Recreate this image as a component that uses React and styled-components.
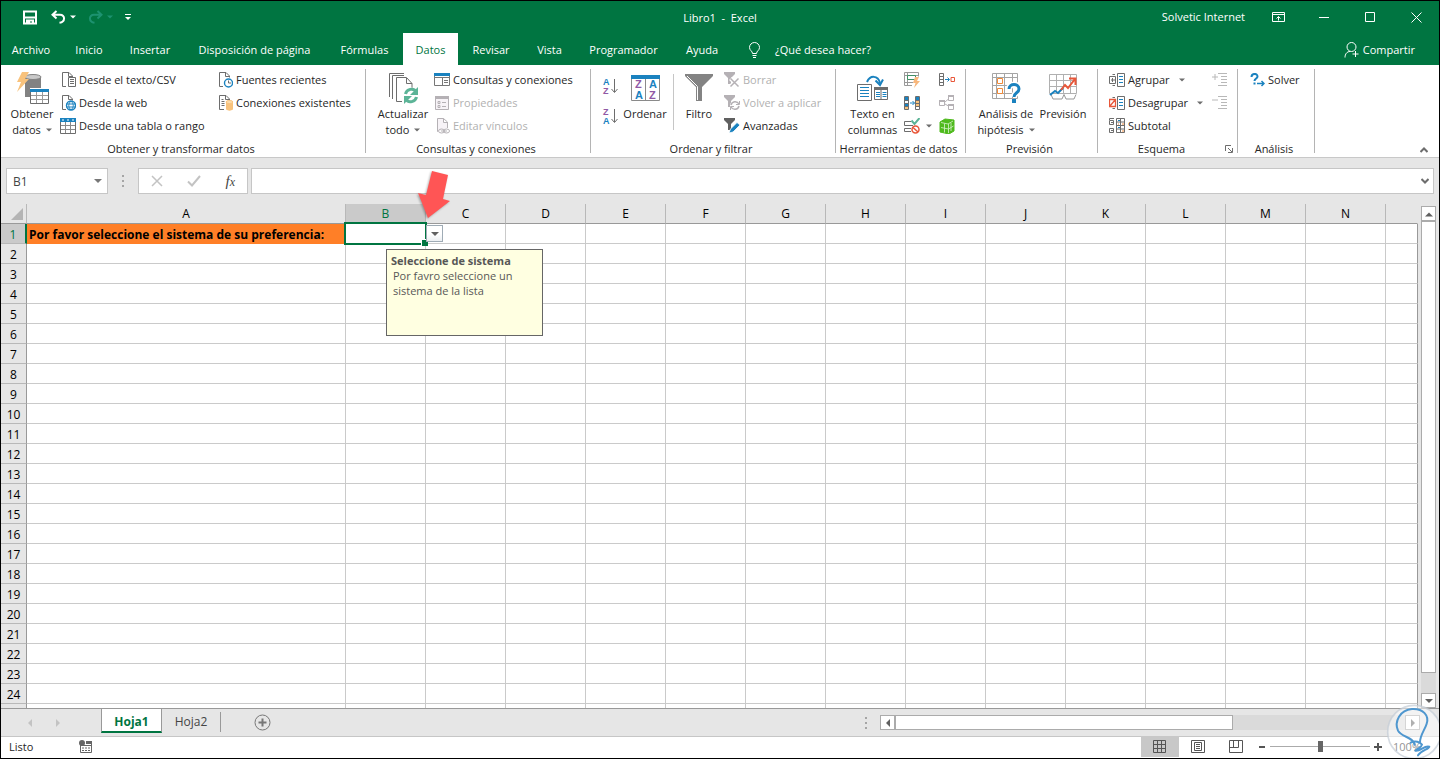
import { useState } from "react";
import styled, { createGlobalStyle } from "styled-components";

const GlobalStyle = createGlobalStyle`
  * { box-sizing: border-box; }
  body {
    margin: 0;
    font-family: "Open Sans", "Noto Sans", sans-serif;
    font-size: 11px;
    line-height: 16px;
    color: #262626;
  }
  button, input {
    font: inherit;
    color: inherit;
    border: 0;
    padding: 0;
    margin: 0;
    background: none;
  }
  svg { display: block; flex: none; }
`;

const GREEN = "#007541";
const GREY = "#6d6d6d";
const BLUE = "#1a82bf";
const SOFT = "#b5b1b5";

const Window = styled.div`
  position: relative;
  display: flex;
  flex-direction: column;
  height: 100vh;
  min-height: 400px;
  border: 1px solid #000;
  background: #e6e6e6;
  overflow: hidden;
`;

/* ---------- title bar ---------- */
const TitleBar = styled.header`
  display: grid;
  grid-template-columns: 1fr auto 1fr;
  align-items: center;
  height: 32px;
  background: ${GREEN};
  color: #fff;
`;
const QuickAccess = styled.div`
  display: flex;
  align-items: center;
  gap: 12px;
  padding-left: 21px;
`;
const PlainButton = styled.button`
  display: flex;
  align-items: center;
  gap: 4px;
`;
const SaveButton = styled(PlainButton)`
  padding-right: 2px;
`;
const Title = styled.h1`
  margin: 0;
  padding-top: 2px;
  font-size: 11px;
  font-weight: 400;
  white-space: pre;
`;
const WindowTools = styled.div`
  display: flex;
  align-items: center;
  justify-content: flex-end;
`;
const UserName = styled.span`
  margin-right: 10px;
`;
const WindowButton = styled.button`
  display: flex;
  align-items: center;
  justify-content: center;
  width: 46px;
  height: 32px;
`;

/* ---------- ribbon tabs ---------- */
const TabBar = styled.nav`
  display: flex;
  height: 32px;
  background: ${GREEN};
  color: #fff;
`;
const RibbonTab = styled.button`
  width: ${(p) => p.$w}px;
  padding-top: 2px;
  white-space: nowrap;
  background: ${(p) => (p.$active ? "#fff" : "none")};
  color: ${(p) => (p.$active ? GREEN : "#fff")};
`;
const TellMe = styled.button`
  display: flex;
  align-items: center;
  gap: 14px;
  margin-left: 16px;
  padding-top: 2px;
`;
const Share = styled(TellMe)`
  gap: 4px;
  margin-left: auto;
  padding-right: 24px;
`;

/* ---------- ribbon ---------- */
const Ribbon = styled.section`
  display: flex;
  height: 93px;
  background: #fff;
  border-bottom: 1px solid #c8c8c8;
`;
const GroupBox = styled.div`
  display: flex;
  flex-direction: column;
  flex: none;
  width: ${(p) => p.$w}px;
  margin: 4px 0;
  border-right: 1px solid #b4b4b4;
`;
const GroupBody = styled.div`
  display: flex;
  flex: none;
  height: 69px;
  padding-left: ${(p) => p.$pad}px;
`;
const GroupFooter = styled.div`
  display: flex;
  align-items: center;
  padding: 3px 4px 0 0;
`;
const GroupLabel = styled.span`
  flex: 1;
  text-align: center;
  white-space: nowrap;
`;
const BigButton = styled.button`
  display: flex;
  flex-direction: column;
  align-items: center;
  flex: none;
  width: ${(p) => p.$w}px;
  white-space: nowrap;
`;
const BigIcon = styled.span`
  display: flex;
  align-items: center;
  justify-content: center;
  height: 37px;
`;
const BigLine = styled.span`
  display: flex;
  align-items: center;
  gap: 5px;
`;
const Stack = styled.div`
  display: flex;
  flex-direction: column;
  flex: none;
  width: ${(p) => p.$w}px;
`;
const SmallButton = styled.button`
  display: flex;
  align-items: center;
  gap: ${(p) => p.$gap || 3}px;
  height: 23px;
  padding-bottom: 2px;
  white-space: nowrap;
  color: ${(p) => (p.disabled ? "#b1b1b1" : "#262626")};
`;
const FarCaret = styled.span`
  margin-left: ${(p) => (p.$far ? 6 : 0)}px;
`;
const SortStack = styled.div`
  display: flex;
  flex-direction: column;
  gap: 14px;
  width: 21px;
  padding: 9px 0 0 3px;
`;
const InnerLine = styled.i`
  width: 1px;
  height: 56px;
  margin: 5px 0 0 4px;
  background: #c6c6c6;
`;
const Collapse = styled.button`
  align-self: flex-end;
  margin: 0 11px 4px auto;
`;

/* ---------- formula bar ---------- */
const FormulaBar = styled.div`
  display: flex;
  align-items: center;
  height: 46px;
  padding: 0 5px;
`;
const Field = styled.div`
  display: flex;
  align-items: center;
  height: 26px;
  background: #fff;
  border: 1px solid #c6c6c6;
`;
const NameBox = styled(Field)`
  width: 102px;
  padding: 0 5px 0 6px;
  input { flex: 1; min-width: 0; padding-top: 1px; font-size: 12px; color: #444; }
`;
const Dots = styled.span`
  display: flex;
  flex-direction: column;
  gap: 3px;
  margin: ${(p) => p.$m};
  &::before, &::after, i { content: ""; width: 2px; height: 2px; background: #a5a5a5; }
`;
const FormulaTools = styled(Field)`
  justify-content: space-between;
  width: 110px;
  padding: 0 12px;
  margin-right: 3px;
`;
const FxButton = styled.button`
  font: italic 15px "Liberation Serif", serif;
  color: #444;
  sub { font-size: 12px; vertical-align: baseline; }
`;
const FormulaInput = styled(Field)`
  flex: 1;
  padding-right: 4px;
  input { flex: 1; padding: 0 6px; }
`;

/* ---------- sheet ---------- */
const SheetArea = styled.main`
  display: flex;
  flex: 1;
  min-height: 0;
  border-bottom: 1px solid #999;
  font-size: 12px;
`;
/* clips rows at the bottom but lets the pointer reach over the formula bar */
const GridWrap = styled.div`
  flex: 1;
  min-width: 0;
  clip-path: inset(-40px 0 0 0);
`;
const Grid = styled.table`
  width: 100%;
  table-layout: fixed;
  border-collapse: separate;
  border-spacing: 0;
`;
const Col = styled.col`
  width: ${(p) => p.$w}px;
`;
const ColHead = styled.th`
  height: 20px;
  padding: 0;
  line-height: 18px;
  font-weight: 400;
  color: ${(p) => (p.$on ? GREEN : "#000")};
  background: ${(p) => (p.$on ? "#cacaca" : "#e6e6e6")};
  border-right: 1px solid ${(p) => (p.$last ? "#e6e6e6" : "#b8b8b8")};
  border-bottom: 1px solid #999;
`;
const Corner = styled(ColHead)`
  padding: 0 3px 0 10px;
`;
const RowHead = styled.th`
  height: 20px;
  padding: 2px 0 0;
  line-height: 17px;
  font-weight: 400;
  color: ${(p) => (p.$on ? GREEN : "#000")};
  background: ${(p) => (p.$on ? "#cacaca" : "#e6e6e6")};
  border-right: ${(p) => (p.$on ? `2px solid ${GREEN}` : "1px solid #999")};
  border-bottom: 1px solid #b8b8b8;
`;
const Cell = styled.td`
  position: relative;
  padding: 2px 2px 0;
  line-height: 17px;
  white-space: nowrap;
  font-weight: 700;
  color: #000;
  background: ${(p) => (p.$fill ? "#ff7f27" : "#fff")};
  border-right: 1px solid ${(p) => (p.$last ? "#999" : "#cacaca")};
  border-bottom: 1px solid ${(p) => (p.$fill ? "#ff7f27" : "#cacaca")};
`;
const Selection = styled.div`
  position: absolute;
  inset: -2px;
  border: 2px solid ${GREEN};
  z-index: 1;
  &::after {
    content: "";
    position: absolute;
    right: -3px;
    bottom: -3px;
    width: 6px;
    height: 6px;
    background: ${GREEN};
    border: solid #fff;
    border-width: 1px 0 0 1px;
  }
`;
const PickButton = styled.button`
  position: absolute;
  left: 80px;
  top: 1px;
  z-index: 1;
  display: flex;
  align-items: center;
  justify-content: center;
  width: 17px;
  height: 17px;
  border: 1px solid #9fabb5;
  background: linear-gradient(#fff 50%, #eceff2);
`;
const InputHint = styled.div`
  position: absolute;
  left: 40px;
  top: 25px;
  z-index: 2;
  width: 157px;
  height: 87px;
  padding: 3px 4px;
  border: 1px solid #666;
  background: #ffffe1;
  color: #575757;
  font-size: 11px;
  font-weight: 400;
  line-height: 15px;
  white-space: normal;
  p { margin: 0 12px 0 2px; }
`;
const Pointer = styled.svg`
  position: absolute;
  left: 69px;
  top: -56px;
  z-index: 3;
  filter: drop-shadow(-1px 1px 1px rgba(0, 0, 0, 0.3));
`;
const VScroll = styled.div`
  display: flex;
  flex-direction: column;
  width: 15px;
  margin: 2px 3px 0;
  background: #dadada;
`;
const ScrollButton = styled.button`
  display: flex;
  align-items: center;
  justify-content: center;
  flex: none;
  width: 15px;
  height: 15px;
  background: #fff;
  border: 1px solid #ababab;
`;
const ThumbV = styled.div`
  flex: 1;
  margin-bottom: 20px;
  background: #fff;
  border: 1px solid #ababab;
`;

/* ---------- sheet tabs + status ---------- */
const SheetTabs = styled.div`
  display: flex;
  align-items: center;
  height: 27px;
  font-size: 12px;
`;
const NavArrows = styled.div`
  display: flex;
  gap: 20px;
  width: 100px;
  padding-left: 25px;
`;
const SheetTab = styled.button`
  align-self: flex-start;
  width: ${(p) => (p.$on ? 61 : 59)}px;
  height: ${(p) => (p.$on ? 24 : 20)}px;
  margin-top: ${(p) => (p.$on ? 0 : 3)}px;
  padding-top: ${(p) => (p.$on ? 3 : 0)}px;
  font-weight: ${(p) => (p.$on ? 700 : 400)};
  color: ${(p) => (p.$on ? GREEN : "#444")};
  background: ${(p) => (p.$on ? "#fff" : "none")};
  border-right: 1px solid #999;
  border-left: ${(p) => (p.$on ? "1px solid #999" : "0")};
  border-bottom: ${(p) => (p.$on ? `2px solid ${GREEN}` : "0")};
`;
const AddSheet = styled.button`
  margin-left: 33px;
`;
const HScroll = styled.div`
  display: flex;
  width: 540px;
  margin: 0 19px 0 13px;
  background: #dadada;
`;
const ThumbH = styled.div`
  width: 338px;
  background: #fff;
  border: 1px solid #ababab;
  margin-right: auto;
`;
const StatusBar = styled.footer`
  display: flex;
  align-items: center;
  height: 22px;
  padding: 0 19px 2px 8px;
  background: #fff;
  border-top: 1px solid #c6c6c6;
`;
const StatusText = styled.span`
  width: 70px;
`;
const Views = styled.div`
  display: flex;
  margin-left: auto;
`;
const ViewButton = styled.button`
  display: flex;
  align-items: center;
  justify-content: center;
  width: 38px;
  height: 21px;
  background: ${(p) => (p.$on ? "#c8c8c8" : "none")};
`;
const Zoom = styled.div`
  display: flex;
  align-items: center;
  gap: 4px;
  margin-left: 4px;
`;
const ZoomSlider = styled.input`
  appearance: none;
  width: 100px;
  height: 12px;
  background: linear-gradient(#ababab, #ababab) center / 100% 1px no-repeat;
  &::-webkit-slider-thumb {
    appearance: none;
    width: 5px;
    height: 11px;
    background: #666;
  }
`;
const ZoomValue = styled.span`
  width: 27px;
  margin-left: 7px;
  color: #222;
`;
const Badge = styled.svg`
  position: absolute;
  right: -1px;
  bottom: -1px;
  z-index: 5;
`;

/* ---------- icons ---------- */
const Ico = ({ w = 16, h = 16, color = GREY, children, ...rest }) => (
  <svg width={w} height={h} viewBox={`0 0 ${w} ${h}`} fill="none" stroke={color} aria-hidden="true" {...rest}>
    {children}
  </svg>
);
const Caret = ({ color = GREY }) => (
  <Ico w={6} h={4}><path d="M0 .5h6L3 3.5z" fill={color} stroke="none" /></Ico>
);
const Arrow = ({ dir, color = "#606060" }) => {
  const d = {
    up: "M0 6.5h8L4 2.5z",
    down: "M0 2h8L4 6z",
    left: "M6 0v8L2 4z",
    right: "M2 0v8l4-4z",
  }[dir];
  return <Ico w={8} h={8}><path d={d} fill={color} stroke="none" /></Ico>;
};
const Doc = ({ color = GREY }) => (
  <path stroke={color} d="M6 14.5H2.5V.5H9L12.5 4v1.500M8.500 .5v4h4" />
);

const SaveIcon = () => (
  <Ico w={15} h={15} color="#fff">
    <path d="M2 1.500h12v12H2zM2 7.500h12M5 13.500v-3h6v3" strokeWidth="2" />
    <path d="M6 11h2v3H6z" fill="#fff" stroke="none" />
  </Ico>
);
const UndoIcon = ({ flip, color }) => (
  <Ico w={15} h={14} color={color} strokeWidth="2">
    <g transform={flip ? "translate(15 0) scale(-1 1)" : undefined}>
      <path d="M5.500 1L1.500 4.800l4 3.700M2 4.800h7c5.500 0 5.500 7.200-.5 8" />
    </g>
  </Ico>
);
const CustomizeIcon = () => (
  <Ico w={6} h={7} color="#fff"><path d="M0 .5h6" /><path d="M0 3h6L3 6z" fill="#fff" stroke="none" /></Ico>
);
const RibbonOptionsIcon = () => (
  <Ico w={13} h={11} color="#fff"><path d="M.5 .5h12v9H.5zM1 2.500h11M6.500 8.500v-4M4.500 6.500l2-2 2 2" /></Ico>
);
const BulbIcon = () => (
  <Ico w={13} h={17} color="#fff"><path d="M4.500 11.500C4.500 9 1.500 8.500 1.500 5.500a5 5 0 0 1 10 0c0 3-3 3.500-3 6zM4.500 13.500h4M5 15.500h3" /></Ico>
);
const PersonIcon = () => (
  <Ico w={15} h={16} color="#fff"><circle cx="7.500" cy="5" r="4.500" /><path d="M1 15.500c0-3.500 2-6 5-6M11.500 9v6M8.500 12h6" /></Ico>
);

const GetDataIcon = () => (
  <Ico w={33} h={34}>
    <path d="M9 6v20h5V17h11V6z" fill="#828282" stroke="none" />
    <ellipse cx="17" cy="6" rx="8" ry="2.500" fill="#c8c8c8" stroke="#828282" />
    <path d="M6 1h7L9 8h4L1 21l4-10H1z" fill="#f8c27c" stroke="none" />
    <path d="M14.500 18.500h18v14h-18z" fill="#fff" />
    <path d="M15 24.500h17M15 28.500h17M20.500 20v12M26.500 20v12" stroke="#999" />
    <path d="M14 18h19v3H14z" fill={BLUE} stroke="none" />
  </Ico>
);
const CsvIcon = () => (
  <Ico><Doc /><path d="M8.500 5.500h7v9h-7z" fill="#fff" /><path d="M10 7.500h4M10 9.500h4M10 11.500h4" /></Ico>
);
const WebIcon = () => (
  <Ico>
    <Doc /><circle cx="11" cy="10.500" r="4.500" fill="#fff" stroke={BLUE} strokeWidth="1.400" />
    <path d="M6.500 9h9M6.500 12h9M11 6c-3 3-3 6 0 9M11 6c3 3 3 6 0 9" stroke={BLUE} />
  </Ico>
);
const TableIcon = () => (
  <Ico><path d="M.5 3.500h15v12H.5z" /><path d="M1 7.500h14M1 11.500h14M5.500 4v11M10.500 4v11" stroke="#8a8a8a" /><path d="M0 0h16v4H0z" fill={BLUE} stroke="none" /><path d="M2 2h2M7 2h2M12 2h2" stroke="#fff" /></Ico>
);
const RecentIcon = () => (
  <Ico><Doc /><circle cx="11.500" cy="11" r="4" fill="#fff" stroke={BLUE} strokeWidth="1.400" /><path d="M11.500 8.500V11H14" /></Ico>
);
const ConnIcon = () => (
  <Ico>
    <path d="M7 14.500H2.500V.5H9L12.500 4v1.500M8.500 .5v4h4M4.500 4.500h2M4.500 6.500h3M4.500 8.500h3M4.500 10.500h3" />
    <path d="M9 7v7.500c2 1.500 5 1.500 7 0V7z" fill="#f8c27c" stroke="none" /><ellipse cx="12.500" cy="7" rx="3.500" ry="1.500" fill="#fbdcae" stroke="#f8c27c" />
  </Ico>
);
const RefreshIcon = () => (
  <Ico w={31} h={32}>
    <path d="M1.500 25V1.500H16M4.500 27V3.500H16M14 29.500H8.500V5.500h10l5.500 6V16M18.500 6v5.500H24" />
    <circle cx="23" cy="23.500" r="8" fill="#fff" stroke="none" />
    <g stroke="#5cb497" strokeWidth="3"><path d="M17.500 22c1-5 8-6.500 10.500-2.500M28.500 25c-1 5-8 6.500-10.500 2.500" /></g>
    <path d="M30 15v8h-8zM16 32v-8h8z" fill="#5cb497" stroke="none" />
  </Ico>
);
const QueriesIcon = () => (
  <Ico><path d="M.5 2.500h15v11H.5zM8.500 6v7M10 8.500h4M10 10.500h4M1 5.500h14" stroke="#777" /><path d="M0 1h16v3H0z" fill={BLUE} stroke="none" /></Ico>
);
const PropsIcon = () => (
  <Ico color={SOFT}><path d="M1.500 1.500h13v13h-13z" fill="#f7f3f7" /><path d="M1 1h14v3H1z" fill={SOFT} stroke="none" /><path d="M4 6.500h2v2H4zM4 10.500h2v2H4zM8 7.500h4M8 11.500h4" /></Ico>
);
const LinksIcon = () => (
  <Ico color={SOFT}><path d="M4 13.500H3.500V.5h6L13.500 4v6M9.500 .5v4h4" fill="#f7f3f7" /><ellipse cx="7.500" cy="13" rx="3" ry="2" /><ellipse cx="12.500" cy="13" rx="3" ry="2" /><path d="M7 13h6" /></Ico>
);

// sort glyphs keep A blue and Z purple whichever comes first
const SortText = styled.text`
  font: ${(p) => p.$size}px "Liberation Sans", sans-serif;
  font-weight: 700;
  stroke: none;
  fill: ${(p) => (p.children === "A" ? BLUE : "#9059a5")};
`;
const SortIcon = ({ top, bottom }) => (
  <Ico w={15} h={16} overflow="visible">
    <SortText x="0" y="7" $size={9}>{top}</SortText>
    <SortText x="0" y="16" $size={9}>{bottom}</SortText>
    <path d="M11.500 1v13M8.500 11l3 3.500 3-3.500" />
  </Ico>
);
const SortBigIcon = () => (
  <Ico w={29} h={26} overflow="visible">
    <path d="M.5 3.500h28v22H.5zM14.500 4v21" stroke="#8a8a8a" />
    <path d="M0 0h29v4H0z" fill={BLUE} stroke="none" />
    <SortText x="4" y="13" $size={11}>Z</SortText>
    <SortText x="4" y="24" $size={11}>A</SortText>
    <SortText x="18" y="13" $size={11}>A</SortText>
    <SortText x="18" y="24" $size={11}>Z</SortText>
  </Ico>
);
const FilterIcon = () => (
  <Ico w={28} h={28}>
    <path d="M0 0h28v2L17 13v14h-6V13L0 2z" fill="#838383" stroke="none" />
    <path d="M2 2l10.500 10.500V26" stroke="#fff" />
  </Ico>
);
const Funnel = ({ color }) => <path d="M0 0h11v2L7 6v6H4V6L0 2z" fill={color} stroke="none" />;
const ClearIcon = () => (
  <Ico color={SOFT}><Funnel color={SOFT} /><path d="M6.500 6.500l8 8M14.500 6.500l-8 8" stroke="#fff" strokeWidth="4" /><path d="M6.500 6.500l8 8M14.500 6.500l-8 8" strokeWidth="1.500" /></Ico>
);
const ReapplyIcon = () => (
  <Ico color={SOFT}><Funnel color={SOFT} /><circle cx="11" cy="10.500" r="5" fill="#fff" stroke="none" /><path d="M7 10c1-4 6-4.500 8-1M15 11c-1 4-6 4.500-8 1" strokeWidth="1.500" /><path d="M15.500 6v3.500H12M6.500 15v-3.500H10" /></Ico>
);
const AdvancedIcon = () => (
  <Ico><Funnel color="#606060" /><path d="M5 15l1.500-4L13 4.500l3 2.500L9 14z" fill={BLUE} stroke="#fff" strokeWidth=".8" /></Ico>
);
const TextColsIcon = () => (
  <Ico w={31} h={26}>
    <path d="M.5 9.500h14v16H.5z" /><path d="M3 12.500h9M3 15.500h9M3 18.500h9M3 21.500h9" stroke={BLUE} />
    <path d="M17.500 12.500h13v12h-13zM24 13v11" /><path d="M17 12h14v3H17z" fill={GREY} stroke="none" />
    <path d="M19 17.500h4M19 19.500h4M19 21.500h4M25.500 17.500h4M25.500 19.500h4M25.500 21.500h4" stroke={BLUE} />
    <path d="M10 7c3-7 11-7 13 1" stroke={BLUE} strokeWidth="2" /><path d="M18.500 5.500l4.500 4.500 3-5.500" stroke={BLUE} strokeWidth="2" />
  </Ico>
);
const FlashFillIcon = () => (
  <Ico><path d="M.5 .5h14v4M.5 .5v13H8M1 3.500h13M1 10.500h8M3.500 1v13" stroke="#999" /><path d="M3.500 3.500h8v4h-8z" fill="#fff" stroke="#3e8f63" /><path d="M11 5h4l-2 4h3l-6 7 1.500-5H9z" fill="#f8b77c" stroke="none" /></Ico>
);
const DupIcon = () => (
  <Ico>
    <path d="M.5 1.500h4v13h-4zM11.500 1.500h4v13h-4z" />
    <path d="M1 2h3v3H1zM1 8h3v3H1zM12 2h3v3h-3z" fill={BLUE} stroke="none" />
    <path d="M1 11h3v3H1zM12 5h3v6h-3z" fill="#f8c27c" stroke="none" />
    <path d="M0 5.500h5M0 8.500h5M0 11.500h5M11 5.500h5M11 8.500h5M11 11.500h5" />
    <path d="M6 8h4.500M8.500 6l2 2-2 2" stroke={BLUE} />
  </Ico>
);
const ValidateIcon = () => (
  <Ico><path d="M7 3.500H.5v4H9M7 10.500H.5v3H7" /><path d="M7.500 2.500l3 3.500 5-6" stroke="#5cb497" strokeWidth="2" /><circle cx="11.500" cy="11.500" r="3.500" stroke="#e8573a" strokeWidth="1.500" /><path d="M9 9.500l5 4.500" stroke="#e8573a" strokeWidth="1.500" /></Ico>
);
const ConsolidateIcon = () => (
  <Ico><path d="M.5 1.500h4v12h-4zM1 4.500h3M1 7.500h3M1 10.500h3" /><path d="M6 7.500h4M8.500 5.500l2 2-2 2" stroke={BLUE} /><path d="M12 5.500h3.500v4H12z" stroke="#e8573a" /></Ico>
);
const RelationsIcon = () => (
  <Ico color={SOFT}><path d="M.5 5.500h5v5h-5zM9.500 .5h5v5h-5zM9.500 9.500h5v5h-5zM6 7l3.500-3M6 9l3.500 2" /><path d="M0 5h6v2H0zM9 0h6v2H9zM9 9h6v2H9z" fill={SOFT} stroke="none" /></Ico>
);
const ModelIcon = () => (
  <Ico><path d="M1 4l5-3 9 1v11l-5 3-9-2z" fill="#4fba1d" stroke="#4fba1d" strokeLinejoin="round" /><path d="M2 4.500l7 1.500 5-3M9.500 6v9M5.500 5.500v9M2 9.500l7.500 1.500 5-3M12 5v8" stroke="#d9f3cf" strokeWidth=".8" /></Ico>
);
const WhatIfIcon = () => (
  <Ico w={29} h={30}>
    <path d="M.5 .5h25v25H.5zM.5 4.500h25M.5 12.500h25M.5 20.500h25M4.500 .5v25M12.500 .5v25M20.500 .5v25" stroke="#a5a5a5" />
    <path d="M5.500 5.500h5v5h-5zM5.500 15.500h5v5h-5z" stroke="#f08a38" fill="#fff" />
    <path d="M17 16c0-6 10-6 10 0 0 4-5 3.500-5 8" stroke="#fff" strokeWidth="6" />
    <path d="M17 16c0-6 10-6 10 0 0 4-5 3.500-5 8" stroke={BLUE} strokeWidth="3" />
    <path d="M20 26h4v4h-4z" fill={BLUE} stroke="none" />
  </Ico>
);
const ForecastIcon = () => (
  <Ico w={29} h={27}>
    <path d="M.5 .5h27v19H.5zM.5 6.500h27M.5 12.500h27M7.500 .5v19M14.500 .5v19M21.500 .5v19" stroke="#b0b0b0" />
    <path d="M2 20.500l2 4.500h9l2-4.500 2 4.500h8l2-4.500" stroke="#999" fill="#fff" />
    <path d="M1 21l5-4 3 2 5-5" stroke={BLUE} strokeWidth="2" /><path d="M12 16l4-5 3 3 7-9M20 4.500h6.500V11" stroke="#e8573a" strokeWidth="2" />
  </Ico>
);
const OutlineBase = () => (
  <>
    <path d="M8.500 1.500h7v13h-7zM6 2.500H3.500M6 13.500H3.500" /><path d="M10 4.500h4M10 7.500h4M10 10.500h4" stroke={BLUE} />
  </>
);
const GroupIcon = () => (
  <Ico><OutlineBase /><path d="M.5 4.500h6v7h-6zM2 8h4M3.500 6v4" /></Ico>
);
const UngroupIcon = () => (
  <Ico><OutlineBase /><path d="M.5 4.500h6v7h-6zM1 11l5-6" stroke="#e8573a" strokeWidth="1.300" /></Ico>
);
const SubtotalIcon = () => (
  <Ico>
    <path d="M.5 2.500h4v4h-4zM.5 10.500h4v4h-4zM2 4.500h2M2 12.500h2M.5 2V.5H5M7.500 .5h8v14h-8zM11.500 .5v14M8 4h7M8 7.500h7M8 11h7" />
    <path d="M9 2.500h2M9 9.500h2" stroke={BLUE} /><path d="M13 6h2M13 13h2M9 6h1" stroke="#f08a38" />
  </Ico>
);
const DetailIcon = ({ plus }) => (
  <Ico w={15} h={14} color="#b8b8b8"><path d={`M6 .5h9M9 3.500h6M9 6.500h6M9 9.500h6M6 12.500h9M0 4h6${plus ? "M3 1v6" : ""}`} /></Ico>
);
const SolverIcon = () => (
  <Ico w={15} h={14} color={BLUE}><path d="M1.500 4c0-4 6-4 6-.5 0 2-3 2-3 4.500M4.500 9.500v2" strokeWidth="2" /><path d="M7 10.500h7M11.500 8l2.500 2.500-2.500 2.500" strokeWidth="1.500" /></Ico>
);
const LauncherIcon = () => (
  <Ico w={8} h={8}><path d="M.5 6V.5H6M3 3l4 4M7.500 3v4.500H3" /></Ico>
);
const MacroIcon = () => (
  <Ico w={14} h={13} color="#666"><path d="M1.500 6v6.500h11V2M1 5.500h12M3 8h2M6 8h2M9 8h2M3 10.500h2M6 10.500h2M9 10.500h2" /><path d="M7 1h6v3H7z" fill="#666" stroke="none" /><circle cx="3" cy="3" r="3" fill="#666" stroke="none" /></Ico>
);

/* ---------- data ---------- */
const TABS = [
  ["Archivo", 60], ["Inicio", 56], ["Insertar", 66], ["Disposición de página", 143], ["Fórmulas", 77],
  ["Datos", 55], ["Revisar", 66], ["Vista", 51], ["Programador", 97], ["Ayuda", 60],
];
const COLUMNS = "ABCDEFGHIJKLMN".split("");
const ROWS = Array.from({ length: 25 }, (_, i) => i + 1);

const Big = ({ w, icon, lines, caret }) => (
  <BigButton $w={w}>
    <BigIcon>{icon}</BigIcon>
    {lines.map((line, i) => (
      <BigLine key={line}>{line}{caret && i === lines.length - 1 && <Caret />}</BigLine>
    ))}
  </BigButton>
);
const Small = ({ icon, children, caret, ...rest }) => (
  <SmallButton {...rest}>
    {icon}
    {children}
    {caret && <FarCaret $far={!!children}><Caret /></FarCaret>}
  </SmallButton>
);
const Group = ({ w, pad, label, children, launcher }) => (
  <GroupBox $w={w}>
    <GroupBody $pad={pad}>{children}</GroupBody>
    <GroupFooter>
      <GroupLabel>{label}</GroupLabel>
      {launcher && <button aria-label={label}><LauncherIcon /></button>}
    </GroupFooter>
  </GroupBox>
);

const ActiveCell = () => (
  <Cell>
    <Selection />
    <PickButton aria-label="Abrir lista"><Arrow dir="down" /></PickButton>
    <InputHint role="tooltip">
      <b>Seleccione de sistema</b>
      <p>Por favro seleccione un sistema de la lista</p>
    </InputHint>
    <Pointer width="36" height="52" viewBox="0 0 36 52">
      <path d="M17 3l16 4-5 24 7 2-22 17L3 25l8 2z" fill="#ff5555" />
    </Pointer>
  </Cell>
);

const App = () => {
  const [tab, setTab] = useState("Datos");
  const [sheet, setSheet] = useState("Hoja1");
  const [zoom, setZoom] = useState(100);

  return (
    <Window>
      <GlobalStyle />
      <TitleBar>
        <QuickAccess>
          <SaveButton aria-label="Guardar"><SaveIcon /></SaveButton>
          <PlainButton aria-label="Deshacer"><UndoIcon color="#fff" /><Caret color="#fff" /></PlainButton>
          <PlainButton aria-label="Rehacer"><UndoIcon flip color="#1d9270" /><Caret color="#1d9270" /></PlainButton>
          <PlainButton aria-label="Personalizar"><CustomizeIcon /></PlainButton>
        </QuickAccess>
        <Title>{"Libro1  -  Excel"}</Title>
        <WindowTools>
          <UserName>Solvetic Internet</UserName>
          <WindowButton aria-label="Opciones de la cinta"><RibbonOptionsIcon /></WindowButton>
          <WindowButton aria-label="Minimizar"><Ico w={10} h={11} color="#fff"><path d="M0 5.500h10" /></Ico></WindowButton>
          <WindowButton aria-label="Maximizar"><Ico w={10} h={10} color="#fff"><path d="M.5 .5h9v9h-9z" /></Ico></WindowButton>
          <WindowButton aria-label="Cerrar"><Ico w={11} h={11} color="#fff"><path d="M.5 .5l10 10M10.500 .5l-10 10" /></Ico></WindowButton>
        </WindowTools>
      </TitleBar>

      <TabBar>
        {TABS.map(([name, w]) => (
          <RibbonTab key={name} $w={w} $active={tab === name} onClick={() => setTab(name)}>{name}</RibbonTab>
        ))}
        <TellMe><BulbIcon />¿Qué desea hacer?</TellMe>
        <Share><PersonIcon />Compartir</Share>
      </TabBar>

      <Ribbon>
        <Group w={365} pad={3} label="Obtener y transformar datos">
          <Big w={56} icon={<GetDataIcon />} lines={["Obtener", "datos"]} caret />
          <Stack $w={157}>
            <Small icon={<CsvIcon />}>Desde el texto/CSV</Small>
            <Small icon={<WebIcon />}>Desde la web</Small>
            <Small icon={<TableIcon />}>Desde una tabla o rango</Small>
          </Stack>
          <Stack>
            <Small icon={<RecentIcon />}>Fuentes recientes</Small>
            <Small icon={<ConnIcon />}>Conexiones existentes</Small>
          </Stack>
        </Group>
        <Group w={225} pad={6} label="Consultas y conexiones">
          <Big w={62} icon={<RefreshIcon />} lines={["Actualizar", "todo"]} caret />
          <Stack>
            <Small icon={<QueriesIcon />}>Consultas y conexiones</Small>
            <Small icon={<PropsIcon />} disabled>Propiedades</Small>
            <Small icon={<LinksIcon />} disabled>Editar vínculos</Small>
          </Stack>
        </Group>
        <Group w={245} pad={9} label="Ordenar y filtrar">
          <SortStack>
            <button aria-label="Ordenar de A a Z"><SortIcon top="A" bottom="Z" /></button>
            <button aria-label="Ordenar de Z a A"><SortIcon top="Z" bottom="A" /></button>
          </SortStack>
          <Big w={48} icon={<SortBigIcon />} lines={["Ordenar"]} />
          <InnerLine />
          <Big w={50} icon={<FilterIcon />} lines={["Filtro"]} />
          <Stack>
            <Small icon={<ClearIcon />} disabled>Borrar</Small>
            <Small icon={<ReapplyIcon />} disabled>Volver a aplicar</Small>
            <Small icon={<AdvancedIcon />}>Avanzadas</Small>
          </Stack>
        </Group>
        <Group w={130} pad={5} label="Herramientas de datos">
          <Big w={63} icon={<TextColsIcon />} lines={["Texto en", "columnas"]} />
          <Stack $w={35}>
            <Small aria-label="Relleno rápido" icon={<FlashFillIcon />} />
            <Small aria-label="Quitar duplicados" icon={<DupIcon />} />
            <Small aria-label="Validación de datos" icon={<ValidateIcon />} $gap={6} caret />
          </Stack>
          <Stack>
            <Small aria-label="Consolidar" icon={<ConsolidateIcon />} />
            <Small aria-label="Relaciones" icon={<RelationsIcon />} disabled />
            <Small aria-label="Modelo de datos" icon={<ModelIcon />} />
          </Stack>
        </Group>
        <Group w={132} pad={8} label="Previsión">
          <Big w={64} icon={<WhatIfIcon />} lines={["Análisis de", "hipótesis"]} caret />
          <Big w={50} icon={<ForecastIcon />} lines={["Previsión"]} />
        </Group>
        <Group w={140} pad={11} label="Esquema" launcher>
          <Stack $w={103}>
            <Small icon={<GroupIcon />} caret>Agrupar</Small>
            <Small icon={<UngroupIcon />} caret>Desagrupar</Small>
            <Small icon={<SubtotalIcon />}>Subtotal</Small>
          </Stack>
          <Stack>
            <Small aria-label="Mostrar detalle" icon={<DetailIcon plus />} disabled />
            <Small aria-label="Ocultar detalle" icon={<DetailIcon />} disabled />
          </Stack>
        </Group>
        <Group w={77} pad={12} label="Análisis">
          <Stack><Small icon={<SolverIcon />}>Solver</Small></Stack>
        </Group>
        <Collapse aria-label="Contraer la cinta">
          <Ico w={8} h={6}><path d="M.5 5L4 1.500 7.500 5" strokeWidth="2" /></Ico>
        </Collapse>
      </Ribbon>

      <FormulaBar>
        <NameBox>
          <input aria-label="Cuadro de nombres" defaultValue="B1" />
          <button aria-label="Nombres"><Arrow dir="down" color="#777" /></button>
        </NameBox>
        <Dots $m="0 14px"><i /></Dots>
        <FormulaTools>
          <button aria-label="Cancelar"><Ico w={12} h={12} color="#c3c3c3"><path d="M1 1l10 10M11 1L1 11" strokeWidth="1.500" /></Ico></button>
          <button aria-label="Introducir"><Ico w={14} h={12} color="#c3c3c3"><path d="M1 6.500l4 4L13 1" strokeWidth="2" /></Ico></button>
          <FxButton aria-label="Insertar función">f<sub>x</sub></FxButton>
        </FormulaTools>
        <FormulaInput>
          <input aria-label="Barra de fórmulas" />
          <button aria-label="Expandir"><Ico w={8} h={6}><path d="M.5 1L4 4.500 7.500 1" strokeWidth="2" /></Ico></button>
        </FormulaInput>
      </FormulaBar>

      <SheetArea>
        <GridWrap>
          <Grid>
            <colgroup>
              <Col $w={26} />
              <Col $w={319} />
              {COLUMNS.slice(1).map((c) => <Col key={c} $w={80} />)}
              <col />
            </colgroup>
            <thead>
              <tr>
                <Corner aria-label="Seleccionar todo"><Ico w={12} h={12}><path d="M12 0v12H0z" fill="#b4b4b4" stroke="none" /></Ico></Corner>
                {COLUMNS.map((c) => <ColHead key={c} $on={c === "B"}>{c}</ColHead>)}
                <ColHead $last />
              </tr>
            </thead>
            <tbody>
              {ROWS.map((r) => (
                <tr key={r}>
                  <RowHead $on={r === 1}>{r}</RowHead>
                  {COLUMNS.map((c) => {
                    if (r === 1 && c === "A") return <Cell key={c} $fill>Por favor seleccione el sistema de su preferencia:</Cell>;
                    if (r === 1 && c === "B") return <ActiveCell key={c} />;
                    return <Cell key={c} />;
                  })}
                  <Cell $last />
                </tr>
              ))}
            </tbody>
          </Grid>
        </GridWrap>
        <VScroll>
          <ScrollButton aria-label="Arriba"><Arrow dir="up" /></ScrollButton>
          <ThumbV />
          <ScrollButton aria-label="Abajo"><Arrow dir="down" /></ScrollButton>
        </VScroll>
      </SheetArea>

      <SheetTabs>
        <NavArrows>
          <button aria-label="Hoja anterior"><Arrow dir="left" color="#c3c3c3" /></button>
          <button aria-label="Hoja siguiente"><Arrow dir="right" color="#c3c3c3" /></button>
        </NavArrows>
        {["Hoja1", "Hoja2"].map((s) => (
          <SheetTab key={s} $on={s === sheet} onClick={() => setSheet(s)}>{s}</SheetTab>
        ))}
        <AddSheet aria-label="Hoja nueva">
          <Ico w={17} h={17} color="#777"><circle cx="8.500" cy="8.500" r="7.500" /><path d="M4.500 8.500h8M8.500 4.500v8" strokeWidth="2" /></Ico>
        </AddSheet>
        <Dots $m="0 0 0 auto"><i /></Dots>
        <HScroll>
          <ScrollButton aria-label="Izquierda"><Arrow dir="left" /></ScrollButton>
          <ThumbH />
          <ScrollButton aria-label="Derecha"><Arrow dir="right" /></ScrollButton>
        </HScroll>
      </SheetTabs>

      <StatusBar>
        <StatusText>Listo</StatusText>
        <button aria-label="Grabar macro"><MacroIcon /></button>
        <Views>
          <ViewButton $on aria-label="Normal"><Ico w={14} h={13} color="#555"><path d="M.5 .5h12v12H.5zM4.500 .5v12M8.500 .5v12M.5 4.500h12M.5 8.500h12" /></Ico></ViewButton>
          <ViewButton aria-label="Diseño de página"><Ico w={14} h={13} color="#555"><path d="M.5 .5h13v12H.5zM3.500 2.500h7v8h-7zM5 4.500h4M5 6.500h4M5 8.500h4" /></Ico></ViewButton>
          <ViewButton aria-label="Salto de página"><Ico w={14} h={13} color="#555"><path d="M.5 .5h13v12H.5zM4.500 .5v7M9.500 .5v7M.5 7.500h9" /></Ico></ViewButton>
        </Views>
        <Zoom>
          <button aria-label="Alejar" onClick={() => setZoom(zoom - 10)}><Ico w={7} h={8} color="#555"><path d="M0 4h6" strokeWidth="2" /></Ico></button>
          <ZoomSlider type="range" aria-label="Zoom" min="0" max="200" value={zoom} onChange={(e) => setZoom(+e.target.value)} />
          <button aria-label="Acercar" onClick={() => setZoom(zoom + 10)}><Ico w={8} h={8} color="#555"><path d="M0 4h8M4 0v8" strokeWidth="2" /></Ico></button>
          <ZoomValue>{zoom}%</ZoomValue>
        </Zoom>
      </StatusBar>

      <Badge width="54" height="55" viewBox="798 42 162 165" fill="none" aria-hidden="true">
        <circle cx="883" cy="126" r="80" fill="#fff" fillOpacity=".5" stroke="#c3ccd6" strokeOpacity=".7" strokeWidth="5" />
        <g stroke="#4f97cf" strokeWidth="6" strokeLinecap="round" strokeLinejoin="round">
          <path d="M884 164c-4-24-40-22-50-42-12-28 6-62 42-65 34-2 52 20 44 44-6 20-20 34-20 56" />
          <path d="M872 158c14-8 28-2 34 6-2 10-14 10-20 18 14 4 28-18 42-12-2 8-24 10-34 26" />
        </g>
      </Badge>
    </Window>
  );
};

export default App;
